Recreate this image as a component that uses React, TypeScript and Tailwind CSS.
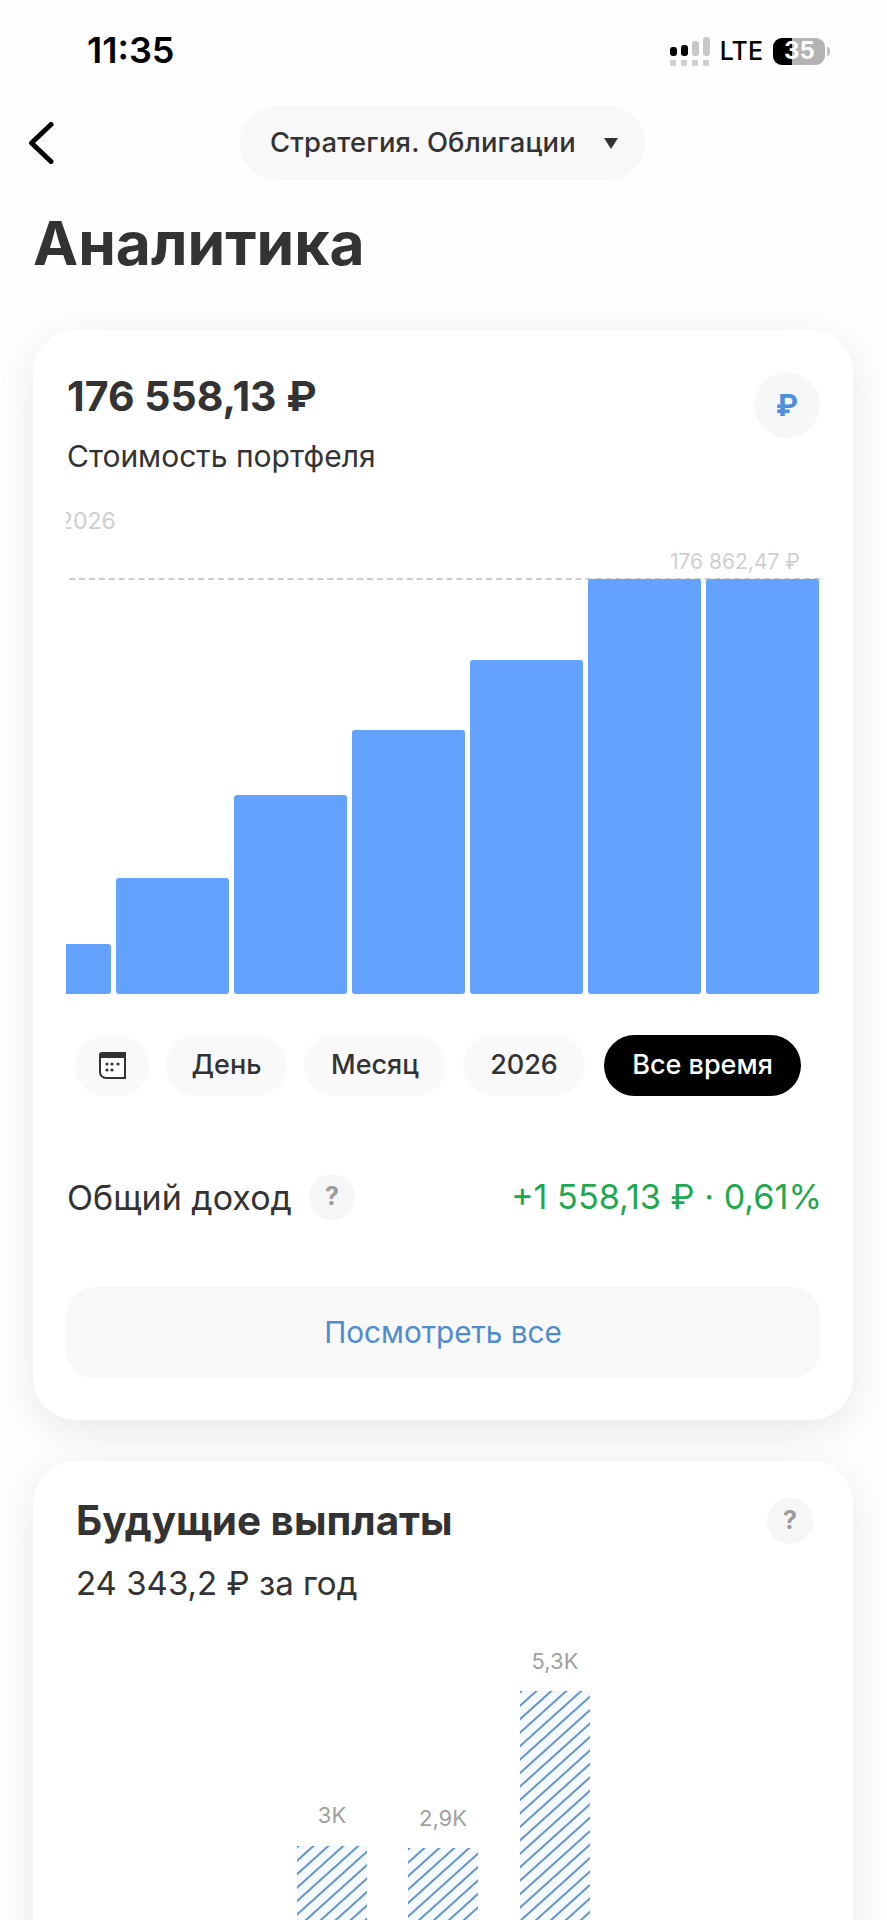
import React from 'react';

const font = { fontFamily: 'Inter, "Noto Sans", sans-serif' };

const bars = [
  { width: 'w-[45px]', height: 'h-[50px]', round: 'rounded-r-[3px]' },
  { width: 'w-[113px]', height: 'h-[116px]', round: 'rounded-[3px]' },
  { width: 'w-[113px]', height: 'h-[199px]', round: 'rounded-[3px]' },
  { width: 'w-[113px]', height: 'h-[264px]', round: 'rounded-[3px]' },
  { width: 'w-[113px]', height: 'h-[334px]', round: 'rounded-[3px]' },
  { width: 'w-[113px]', height: 'h-[415px]', round: 'rounded-[3px]' },
  { width: 'w-[113px]', height: 'h-[415px]', round: 'rounded-[3px]' },
];

const Signal = () => (
  <svg width="41" height="30" viewBox="0 0 41 30" className="mr-[9px]">
    <rect x="0" y="11" width="7" height="9" rx="3" fill="#000" />
    <rect x="11" y="9" width="7" height="11" rx="3" fill="#000" />
    <rect x="22" y="5" width="7" height="15" rx="3" fill="#c8c8c8" />
    <rect x="33" y="1" width="7" height="19" rx="3" fill="#c8c8c8" />
    <rect x="0" y="24" width="6" height="6" rx="1" fill="#cfcfcf" />
    <rect x="11" y="24" width="6" height="6" rx="1" fill="#cfcfcf" />
    <rect x="22" y="24" width="6" height="6" rx="1" fill="#cfcfcf" />
    <rect x="33" y="24" width="6" height="6" rx="1" fill="#cfcfcf" />
  </svg>
);

const BackIcon = () => (
  <svg width="26" height="42" viewBox="0 0 26 42" fill="none" className="ml-[28px]">
    <path d="M23 2.5L3.5 21L23 39.5" stroke="#000" strokeWidth="5" strokeLinecap="round" strokeLinejoin="round" />
  </svg>
);

const CalendarIcon = () => (
  <svg width="28" height="27" viewBox="0 0 28 27">
    <path d="M4 0H28V27H8A7 7 0 0 1 1 20V3A3 3 0 0 1 4 0Z" fill="#333" />
    <path d="M3 6H26V25H8A5 5 0 0 1 3 20Z" fill="#fff" />
    <circle cx="9" cy="12" r="1.6" fill="#333" />
    <circle cx="14" cy="12" r="1.6" fill="#333" />
    <circle cx="20" cy="12" r="1.6" fill="#333" />
    <circle cx="9" cy="18" r="1.6" fill="#333" />
    <circle cx="14" cy="18" r="1.6" fill="#333" />
  </svg>
);

const Question = ({ className }: { className: string }) => (
  <div className={`flex h-[46px] w-[46px] items-center justify-center rounded-full bg-[#f6f6f6] text-[25px] font-bold text-[#9c9c9c] ${className}`}>
    ?
  </div>
);

const Chip = ({ label, className }: { label: string; className: string }) => (
  <div className={`flex h-[61px] items-center justify-center rounded-full bg-[#f9f9f9] text-[27px] font-medium text-[#333] ${className}`}>
    {label}
  </div>
);

const Hatch = ({ id, height }: { id: string; height: string }) => (
  <svg className={`w-full ${height}`}>
    <defs>
      <pattern id={id} width="10" height="10" patternUnits="userSpaceOnUse" patternTransform="rotate(-42)">
        <rect width="10" height="10" fill="#f4f9fe" />
        <rect width="10" height="1.9" fill="#5f8fc8" />
      </pattern>
    </defs>
    <rect width="100%" height="100%" fill={`url(#${id})`} />
  </svg>
);

const PayoutBar = ({ id, label, bar, labelGap, left }: { id: string; label: string; bar: string; labelGap: string; left: string }) => (
  <div className={`flex w-[70px] flex-col items-center ${left}`}>
    <span className={`text-[22px] leading-[26px] text-[#a0a0a0] ${labelGap}`}>{label}</span>
    <Hatch id={id} height={bar} />
  </div>
);

const App = () => {
  return (
    <div className="h-[1920px] w-[887px] overflow-hidden bg-[#fefefe] text-[#333]" style={font}>
      {/* status bar */}
      <div className="flex h-[106px] items-start justify-between pl-[87px] pr-[57px] pt-[29px]">
        <span className="text-[36px] font-semibold leading-[43px] text-black">11:35</span>
        <div className="mt-[7px] flex items-center">
          <Signal />
          <span className="mr-[10px] text-[25px] font-medium leading-[30px] text-black">LTE</span>
          <div className="relative h-[27px] w-[52px] overflow-hidden rounded-[9px] bg-[#b3b3b3]">
            <div className="h-full w-[19px] bg-black" />
            <span className="absolute inset-0 flex items-center justify-center pl-[1px] text-[24px] font-bold leading-none text-white">35</span>
          </div>
          <div className="ml-[2px] h-[9px] w-[3px] rounded-r-full bg-[#c4c4c4]" />
        </div>
      </div>

      {/* top nav */}
      <div className="flex h-[74px] items-center">
        <BackIcon />
        <div className="ml-[186px] flex h-[74px] w-[405px] items-center rounded-full bg-[#f8f8f8] pl-[30px]">
          <span className="text-[27.4px] font-medium tracking-[0.2px] text-[#333]">Стратегия. Облигации</span>
          <div className="ml-[28px] h-0 w-0 border-x-[7px] border-t-[11px] border-x-transparent border-t-[#333]" />
        </div>
      </div>

      <h1 className="ml-[33px] mt-[27px] text-[60.5px] font-bold leading-[72px] text-[#333]">Аналитика</h1>

      {/* portfolio card */}
      <div className="ml-[33px] mt-[51px] h-[1090px] w-[820px] rounded-[42px] bg-white pl-[33px] pr-[33px] pt-[42px] shadow-[0_10px_40px_rgba(0,0,0,0.09)]">
        <div className="flex items-start justify-between">
          <div>
            <div className="pl-[1px] text-[41px] font-bold leading-[48px] text-[#333]">176 558,13 ₽</div>
            <div className="mt-[18px] pl-[1px] text-[30px] leading-[36px] text-[#333]">Стоимость портфеля</div>
          </div>
          <div className="flex h-[66px] w-[66px] items-center justify-center rounded-full bg-[#f6f7f9] text-[30px] font-bold text-[#4f8fdc]">₽</div>
        </div>
        <div className="mt-[33px] h-[28px] w-[80px] overflow-hidden">
          <div className="-ml-[7px] text-[23px] leading-[28px] text-[#cfcfcf]">2026</div>
        </div>
        <div className="mt-[14px] pr-[20px] text-right text-[21px] leading-[26px] text-[#cfcfcf]">176 862,47 ₽</div>
        <div className="ml-[3px] mt-[3px] border-t-2 border-dashed border-[#cccccc]" />
        <div className="-mt-[1px] flex h-[415px] items-end gap-[5px]">
          {bars.map((bar, i) => (
            <div key={i} className={`${bar.width} ${bar.height} ${bar.round} shrink-0 bg-[#64a2ff]`} />
          ))}
        </div>

        <div className="ml-[9px] mt-[41px] flex">
          <div className="flex h-[61px] w-[74px] items-center justify-center rounded-full bg-[#f9f9f9]">
            <CalendarIcon />
          </div>
          <Chip label="День" className="ml-[17px] w-[121px]" />
          <Chip label="Месяц" className="ml-[17px] w-[142px]" />
          <Chip label="2026" className="ml-[17px] w-[122px]" />
          <div className="ml-[19px] flex h-[61px] w-[197px] items-center justify-center rounded-full bg-black text-[27px] font-medium text-white">Все время</div>
        </div>

        <div className="mt-[78px] flex h-[46px] items-center justify-between">
          <div className="flex items-center pl-[1px]">
            <span className="text-[34px] text-[#333]">Общий доход</span>
            <Question className="ml-[17px]" />
          </div>
          <span className="-mr-[2px] text-[34.2px] text-[#1fa84f]">+1 558,13 ₽ · 0,61%</span>
        </div>

        <div className="mt-[67px] flex h-[91px] items-center justify-center rounded-[28px] bg-[#f8f8f8] text-[29.7px] text-[#4f8bcf]">Посмотреть все</div>
      </div>

      {/* future payouts card */}
      <div className="ml-[33px] mt-[41px] h-[600px] w-[820px] rounded-[42px] bg-white pl-[43px] pr-[40px] pt-[36px] shadow-[0_10px_40px_rgba(0,0,0,0.09)]">
        <div className="flex items-center justify-between">
          <span className="text-[40.4px] font-bold leading-[48px] text-[#333]">Будущие выплаты</span>
          <Question className="" />
        </div>
        <div className="mt-[18px] text-[33px] leading-[40px] text-[#333]">24 343,2 ₽ за год</div>
        <div className="ml-[221px] mt-[49px] flex h-[320px] items-start">
          <PayoutBar id="hatch-a" label="3K" bar="h-[200px]" labelGap="mb-[18px]" left="mt-[150px]" />
          <PayoutBar id="hatch-b" label="2,9K" bar="h-[200px]" labelGap="mb-[17px]" left="ml-[41px] mt-[153px]" />
          <PayoutBar id="hatch-c" label="5,3K" bar="h-[300px]" labelGap="mb-[17px]" left="ml-[42px] -mt-[4px]" />
        </div>
      </div>
    </div>
  );
};

export default App;
